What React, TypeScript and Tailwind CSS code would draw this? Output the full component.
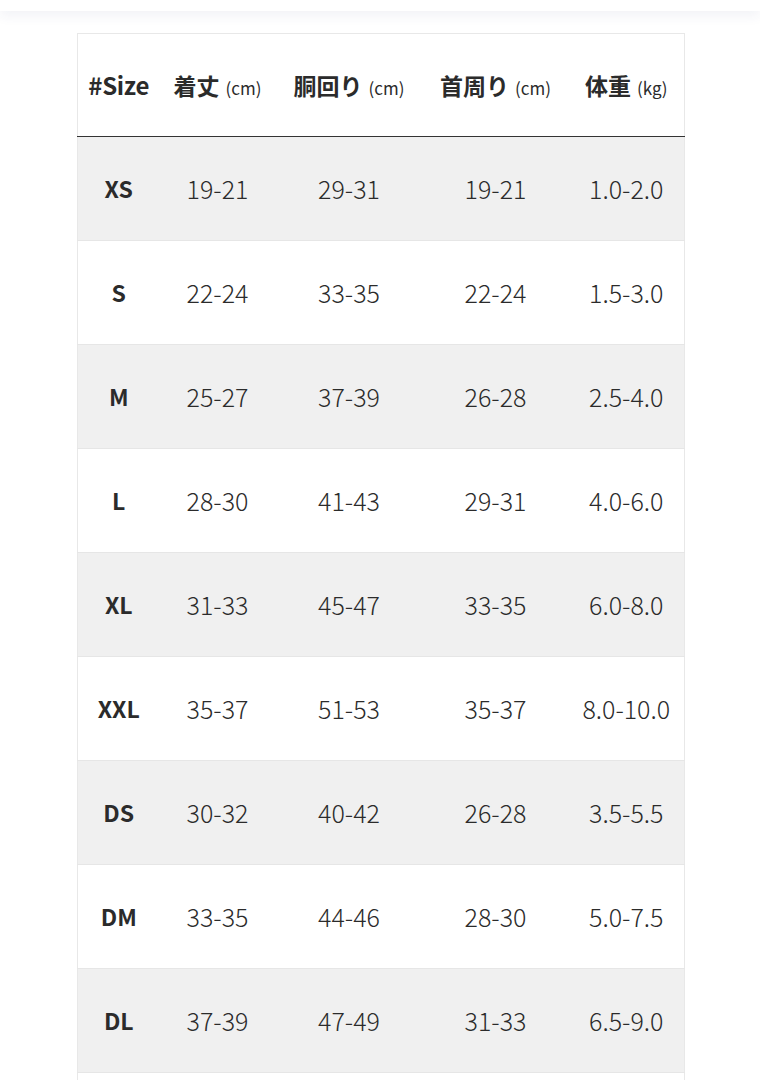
const rows = [
  ['XS', '19-21', '29-31', '19-21', '1.0-2.0'],
  ['S', '22-24', '33-35', '22-24', '1.5-3.0'],
  ['M', '25-27', '37-39', '26-28', '2.5-4.0'],
  ['L', '28-30', '41-43', '29-31', '4.0-6.0'],
  ['XL', '31-33', '45-47', '33-35', '6.0-8.0'],
  ['XXL', '35-37', '51-53', '35-37', '8.0-10.0'],
  ['DS', '30-32', '40-42', '26-28', '3.5-5.5'],
  ['DM', '33-35', '44-46', '28-30', '5.0-7.5'],
  ['DL', '37-39', '47-49', '31-33', '6.5-9.0'],
];

const heads = [
  ['着丈', '(cm)'],
  ['胴回り', '(cm)'],
  ['首周り', '(cm)'],
  ['体重', '(kg)'],
];

const widths = ['w-[82px]', 'w-[116px]', 'w-[147px]', 'w-[146px]', 'w-[116px]'];

export default function App() {
  return (
    <div
      className="h-[1080px] overflow-hidden bg-white text-[#2b2b2b]"
      style={{ fontFamily: '"Noto Sans CJK JP", "Noto Sans", sans-serif' }}
    >
      <div className="h-[11px] bg-white shadow-[0_3px_14px_rgba(40,60,120,0.09)]" />
      <div className="pt-[22px] pl-[77px]">
        <table className="w-[607px] table-fixed border-collapse border border-[#e8e8e8]">
          <colgroup>
            {widths.map((w, i) => (
              <col key={i} className={w} />
            ))}
          </colgroup>
          <thead>
            <tr className="h-[103px] border-b border-b-[#333]">
              <th className="text-center text-[24px] font-bold tracking-[-0.3px]">#Size</th>
              {heads.map(([jp, unit]) => (
                <th key={jp} className="text-center whitespace-nowrap">
                  <span className="text-[23px] font-bold">{jp}</span>
                  <span className="ml-[6px] text-[17px] font-normal">{unit}</span>
                </th>
              ))}
            </tr>
          </thead>
          <tbody>
            {rows.map((r, i) => (
              <tr
                key={r[0]}
                className={`h-[104px] border-b border-[#e6e6e6] ${i % 2 === 0 ? 'bg-[#f0f0f0]' : 'bg-white'}`}
              >
                <td className="text-center text-[23px] font-bold">{r[0]}</td>
                {r.slice(1).map((v, j) => (
                  <td key={j} className="text-center text-[25px] font-light">
                    {v}
                  </td>
                ))}
              </tr>
            ))}
            <tr className="h-[20px] bg-white">
              <td colSpan={5} />
            </tr>
          </tbody>
        </table>
      </div>
    </div>
  );
}
